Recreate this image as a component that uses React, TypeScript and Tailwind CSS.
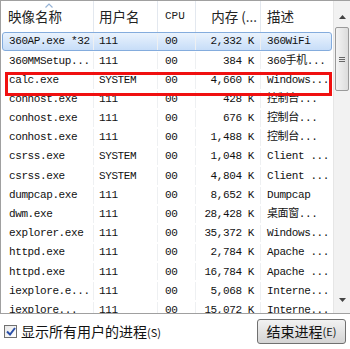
import React from 'react';

type Proc = { name: string; user: string; cpu: string; mem: string; desc: string };

const rows: Proc[] = [
  { name: '360AP.exe *32', user: '111', cpu: '00', mem: '2,332 K', desc: '360WiFi' },
  { name: '360MMSetup...', user: '111', cpu: '00', mem: '384 K', desc: '360手机...' },
  { name: 'calc.exe', user: 'SYSTEM', cpu: '00', mem: '4,660 K', desc: 'Windows...' },
  { name: 'conhost.exe', user: '111', cpu: '00', mem: '428 K', desc: '控制台...' },
  { name: 'conhost.exe', user: '111', cpu: '00', mem: '676 K', desc: '控制台...' },
  { name: 'conhost.exe', user: '111', cpu: '00', mem: '1,488 K', desc: '控制台...' },
  { name: 'csrss.exe', user: 'SYSTEM', cpu: '00', mem: '1,048 K', desc: 'Client ...' },
  { name: 'csrss.exe', user: 'SYSTEM', cpu: '00', mem: '4,804 K', desc: 'Client ...' },
  { name: 'dumpcap.exe', user: '111', cpu: '00', mem: '8,652 K', desc: 'Dumpcap' },
  { name: 'dwm.exe', user: '111', cpu: '00', mem: '28,428 K', desc: '桌面窗...' },
  { name: 'explorer.exe', user: '111', cpu: '00', mem: '35,372 K', desc: 'Windows...' },
  { name: 'httpd.exe', user: '111', cpu: '00', mem: '2,784 K', desc: 'Apache ...' },
  { name: 'httpd.exe', user: '111', cpu: '00', mem: '16,784 K', desc: 'Apache ...' },
  { name: 'iexplore.e...', user: '111', cpu: '00', mem: '5,068 K', desc: 'Interne...' },
  { name: 'iexplore...', user: '111', cpu: '00', mem: '15,072 K', desc: 'Interne...' },
];

const mono = "font-['Liberation_Mono','Noto_Sans_CJK_SC',monospace]";
const cjk = "font-['Noto_Sans_CJK_SC','Liberation_Sans',sans-serif]";

function Row({ p, selected }: { p: Proc; selected?: boolean }) {
  return (
    <div
      className={
        'flex h-[19.2px] shrink-0 items-stretch text-[11px] tracking-[-0.4px] text-[#111] ' +
        mono +
        (selected
          ? ' rounded-[3px] border border-[#84acdd] bg-gradient-to-b from-[#eaf3fd] to-[#c7ddf8]'
          : ' border border-transparent')
      }
    >
      <div className="flex w-[91px] shrink-0 items-center overflow-hidden whitespace-nowrap border-r border-[#eef0f2] pl-[6px]">{p.name}</div>
      <div className="flex w-[64px] shrink-0 items-center border-r border-[#eef0f2] pl-[5px]">{p.user}</div>
      <div className="flex w-[38px] shrink-0 items-center border-r border-[#eef0f2] pl-[7px]">{p.cpu}</div>
      <div className="flex w-[65px] shrink-0 items-center justify-end border-r border-[#eef0f2] pr-[6px]">{p.mem}</div>
      <div className="flex w-[70px] shrink-0 items-center whitespace-nowrap pl-[6px]">{p.desc}</div>
    </div>
  );
}

export default function App() {
  return (
    <div className="flex h-[349px] w-[350px] flex-col bg-white">
      <div className="relative flex h-[314px] shrink-0 border-b border-l border-t border-[#a0a0a0]">
        <div className="flex min-w-0 flex-1 flex-col overflow-hidden">
          <div className={'flex h-[31px] shrink-0 items-center text-[13.5px] text-[#222] ' + cjk}>
            <div className="relative flex h-full w-[93px] shrink-0 items-center border-r border-[#e3e8ef] pl-[7px]">
              映像名称
              <svg className="absolute left-[44px] top-[2px]" width="8" height="5" viewBox="0 0 8 5">
                <path d="M0.5 4.5 L4 1 L7.5 4.5" fill="none" stroke="#97b4d6" strokeWidth="1.2" />
              </svg>
            </div>
            <div className="flex h-full w-[64px] shrink-0 items-center border-r border-[#e3e8ef] pl-[5px]">用户名</div>
            <div className={'flex h-full w-[38px] shrink-0 items-center border-r border-[#e3e8ef] pl-[7px] text-[11px] ' + mono}>CPU</div>
            <div className="flex h-full w-[65px] shrink-0 items-center justify-end border-r border-[#e3e8ef] pr-[3px]">
              内存 (...
            </div>
            <div className="flex h-full w-[70px] shrink-0 items-center pl-[6px]">描述</div>
          </div>
          <div className="flex flex-col px-[1px]">
            {rows.map((p, i) => (
              <Row key={i} p={p} selected={i === 0} />
            ))}
          </div>
        </div>
        <div className="flex w-[17px] shrink-0 flex-col border-l border-[#e6e6e6] bg-[#f2f2f2]">
          <div className="flex h-[26px] shrink-0 items-end justify-center pb-[8px]">
            <svg width="7" height="4" viewBox="0 0 7 4">
              <path d="M0 4 L3.5 0 L7 4 Z" fill="#444" />
            </svg>
          </div>
          <div className="mx-[1px] flex h-[64px] shrink-0 items-center justify-center rounded-[2px] border border-[#9a9a9a] bg-gradient-to-r from-[#f4f4f4] to-[#dcdcdc]">
            <div className="flex flex-col gap-[1px]">
              <div className="h-px w-[6px] bg-[#666]" />
              <div className="h-px w-[6px] bg-[#666]" />
              <div className="h-px w-[6px] bg-[#666]" />
            </div>
          </div>
          <div className="flex-1" />
          <div className="flex h-[20px] shrink-0 items-start justify-center pt-[5px]">
            <svg width="7" height="4" viewBox="0 0 7 4">
              <path d="M0 0 L3.5 4 L7 0 Z" fill="#444" />
            </svg>
          </div>
        </div>
        <div className="pointer-events-none absolute left-[4px] top-[71px] h-[24px] w-[327px] border-[3px] border-[#f01010]" />
      </div>
      <div className="flex flex-1 items-center justify-between pl-[4px] pr-[4px]">
        <div className={'flex items-center gap-[4px] text-[14px] text-[#111] ' + cjk}>
          <div className="flex h-[13px] w-[13px] items-center justify-center border border-[#707070] bg-gradient-to-br from-[#e8e8e8] to-white">
            <svg width="10" height="9" viewBox="0 0 10 9">
              <path d="M1 4.5 L4 7.5 L9 1" fill="none" stroke="#2a4fa8" strokeWidth="2" />
            </svg>
          </div>
          <span>显示所有用户的进程<span className="text-[11px]">(S)</span></span>
        </div>
        <div className={'flex h-[25px] w-[89px] items-center justify-center rounded-[3px] border border-[#707070] bg-gradient-to-b from-[#f2f2f2] to-[#d4d4d4] text-[14px] text-[#111] ' + cjk}>
          结束进程<span className="text-[11px]">(E)</span>
        </div>
      </div>
    </div>
  );
}
